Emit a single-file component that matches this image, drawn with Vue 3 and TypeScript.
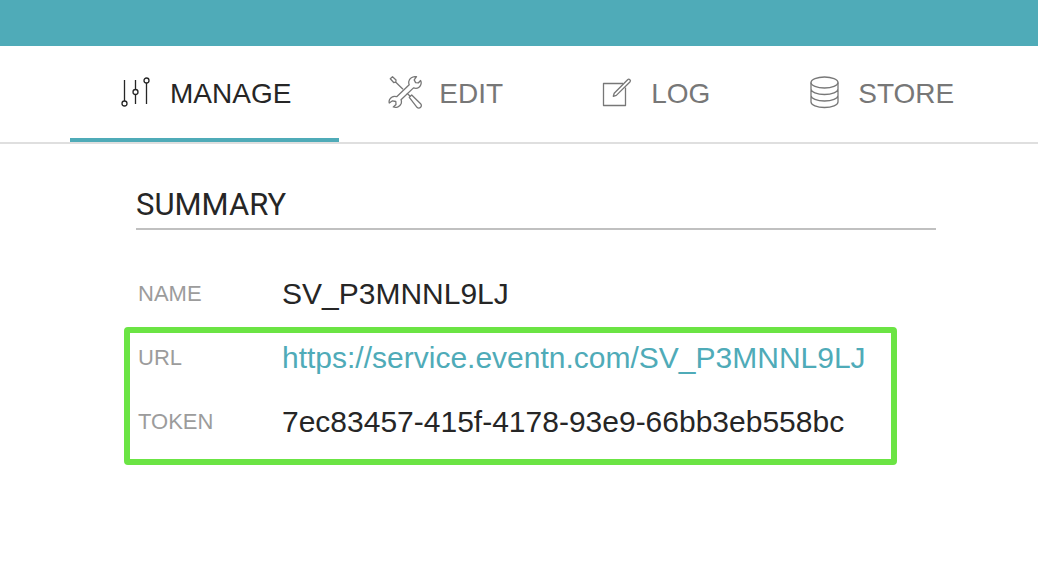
<script setup lang="ts">
import { ref } from 'vue'

type TabId = 'manage' | 'edit' | 'log' | 'store'

const tabs: { id: TabId; label: string }[] = [
  { id: 'manage', label: 'MANAGE' },
  { id: 'edit', label: 'EDIT' },
  { id: 'log', label: 'LOG' },
  { id: 'store', label: 'STORE' },
]
const active = ref<TabId>('manage')

const service = {
  name: 'SV_P3MNNL9LJ',
  url: 'https://service.eventn.com/SV_P3MNNL9LJ',
  token: '7ec83457-415f-4178-93e9-66bb3eb558bc',
}
</script>

<template>
  <div class="page">
    <header class="topbar"></header>
    <nav class="tabs">
      <button
        v-for="tab in tabs"
        :key="tab.id"
        type="button"
        class="tab"
        :class="{ active: active === tab.id }"
        @click="active = tab.id"
      >
        <svg class="icon" width="36" height="36" viewBox="0 0 36 36" aria-hidden="true">
          <template v-if="tab.id === 'manage'">
            <path d="M6.500 4V25M17.500 4v9.500M17.500 18.500V28M28.500 7v21" />
            <circle cx="6.500" cy="27.500" r="2.500" />
            <circle cx="17.500" cy="16" r="2.500" />
            <circle cx="28.500" cy="4.500" r="2.500" />
          </template>
          <template v-else-if="tab.id === 'edit'">
            <path d="M3.300 2.800 5.500 0.800 9 4 8.800 6.200 6.700 6.500ZM8.800 6.200 16 13.300M20 17.300 23.200 20.300" />
            <path d="M22.300 21.300 24.700 19 33.600 27.700a2.500 2.500 0 0 1-3.600 3.600Z" />
            <path
              d="M29.500 0.700C25.500 0.200 22.300 2.500 21.800 5.500 21.600 6.800 21.800 7.800 22.200 8.800L9.700 20.700C7 19.800 4 21 2.600 23.500 2.100 24.600 1.900 25.800 2.300 27L5.500 24.800 8.800 25.500 9 28.500 6.300 31C9.500 32.200 13 30.500 14.200 27.500 14.600 26 14.500 24.800 14 23.800L26.500 11.900C29.500 12.800 32.500 11.500 33.700 8.900 34.400 7.300 34.300 5.800 33.600 4.500L31.500 6.800 28.600 6.600 27.200 3.900Z"
            />
          </template>
          <template v-else-if="tab.id === 'log'">
            <path d="M24 7.500H4.500V29.500H26.500V11.500" />
            <path d="M14.300 20.300 15.200 17.300 28.600 3.700a1.600 1.600 0 0 1 2.300 2.300L17.300 19.400Z" />
          </template>
          <template v-else>
            <ellipse cx="18.500" cy="6.500" rx="13.500" ry="5.500" />
            <path d="M5 6.500V26c0 3 6 5.500 13.500 5.500S32 29 32 26V6.500M5 13c0 3 6 5.500 13.500 5.500S32 16 32 13M5 19.500c0 3 6 5.500 13.500 5.500S32 22.500 32 19.500" />
          </template>
        </svg>
        <span>{{ tab.label }}</span>
      </button>
    </nav>

    <main class="content">
      <h1 class="heading">SUMMARY</h1>
      <dl class="fields">
        <div class="row">
          <dt>NAME</dt>
          <dd>{{ service.name }}</dd>
        </div>
      </dl>
      <dl class="fields highlighted">
        <div class="row">
          <dt>URL</dt>
          <dd><a :href="service.url">{{ service.url }}</a></dd>
        </div>
        <div class="row">
          <dt>TOKEN</dt>
          <dd>{{ service.token }}</dd>
        </div>
      </dl>
    </main>
  </div>
</template>

<style>
body {
  margin: 0;
  background: #fff;
}
</style>

<style scoped>
.page {
  min-height: 100vh;
  font-family: "Liberation Sans", Arial, sans-serif;
  color: #262626;
}
.topbar {
  height: 46px;
  background: #4fabb8;
}
.tabs {
  display: flex;
  padding-left: 70px;
  border-bottom: 2px solid #dfdfdf;
}
.tab {
  display: flex;
  align-items: center;
  gap: 16px;
  height: 96px;
  padding: 4px 48px 0;
  border: 0;
  border-bottom: 4px solid transparent;
  background: none;
  font: inherit;
  font-size: 28px;
  line-height: 32px;
  color: #777;
  cursor: pointer;
}
.tab.active {
  color: #262626;
  border-bottom-color: #4fabb8;
}
.icon {
  flex: none;
  fill: none;
  stroke: currentColor;
  stroke-width: 1.3;
  stroke-linejoin: round;
}
.content {
  padding: 44px 102px 0 136px;
}
.heading {
  margin: 0 0 32px;
  padding-bottom: 6px;
  border-bottom: 2px solid #c0c0c0;
  font-family: Roboto, "Liberation Sans", sans-serif;
  font-size: 31px;
  font-weight: 400;
  line-height: 34px;
}
.fields {
  position: relative;
  margin: 0;
}
.row {
  display: flex;
  align-items: center;
  height: 64px;
  padding-left: 2px;
}
dt {
  width: 144px;
  flex: none;
  font-size: 22px;
  color: #9c9c9c;
}
dd {
  margin: 0;
  font-size: 30px;
  line-height: 36px;
}
a {
  color: #4fabb8;
  text-decoration: none;
}
.highlighted::after {
  content: "";
  position: absolute;
  inset: 1px 39px -11px -12px;
  border: 6px solid #6be444;
  border-radius: 4px;
  pointer-events: none;
}
</style>
